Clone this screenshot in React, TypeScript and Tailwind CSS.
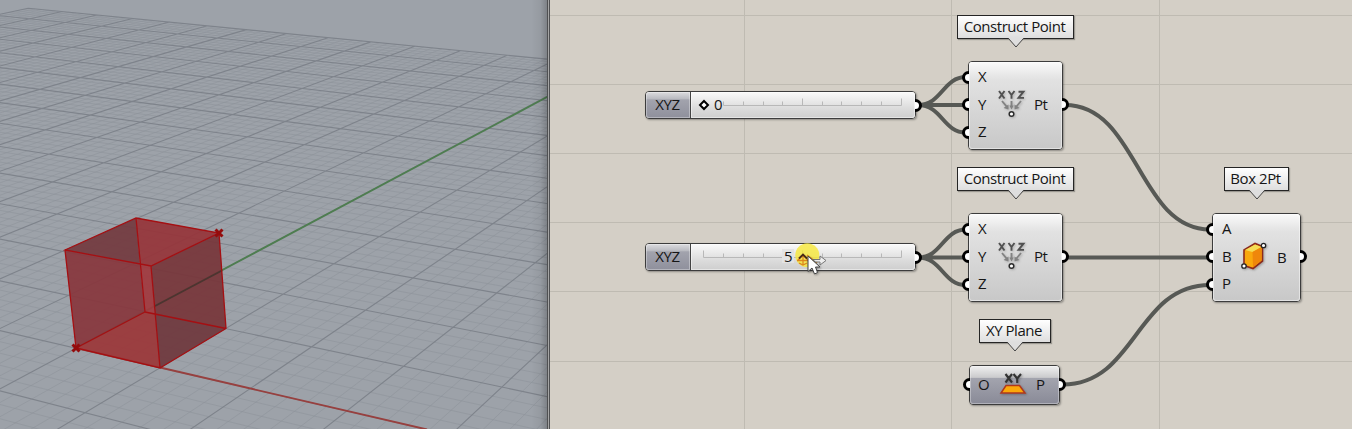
import React from 'react';

type Pt = [number, number];

// Perspective projection of the ground plane onto the viewport.
const project = (x: number, y: number): Pt => {
  const w = 1 - 0.006497 * x + 0.013389 * y;
  return [(76 + 15.795 * x + 15.676 * y) / w, (348.2 + 1.517 * x - 3.177 * y) / w];
};

const segment = (a: Pt, b: Pt) =>
  `M${a[0].toFixed(2)} ${a[1].toFixed(2)}L${b[0].toFixed(2)} ${b[1].toFixed(2)}`;

const X_MIN = -70;
const X_MAX = 45;
const Y_MIN = -30;
const Y_MAX = 70;

const gridPath = (major: boolean) => {
  const parts: string[] = [];
  for (let x = X_MIN; x <= X_MAX; x++) {
    if ((x % 5 === 0) === major) parts.push(segment(project(x, Y_MIN), project(x, Y_MAX)));
  }
  for (let y = Y_MIN; y <= Y_MAX; y++) {
    if ((y % 5 === 0) === major) parts.push(segment(project(X_MIN, y), project(X_MAX, y)));
  }
  return parts.join('');
};

const Cross = ({ x, y }: { x: number; y: number }) => (
  <path d={`M${x - 3.5} ${y - 3.5}l7 7m0 -7l-7 7`} stroke="#940c0c" strokeWidth="3" />
);

const Viewport = () => (
  <div className="relative h-full w-[547px] shrink-0 overflow-hidden bg-[#9da2a9]">
    <svg width="547" height="429" fill="none" className="block">
      <path d={gridPath(false)} stroke="#8d9299" strokeWidth="0.9" strokeOpacity="0.62" />
      <path d={gridPath(true)} stroke="#7e838b" strokeWidth="1.1" />
      <path d="M76 348L548 96.5" stroke="#4e7d50" strokeWidth="1.9" />
      <path d="M76 348L427 429.5" stroke="#97403f" strokeWidth="1.8" />
      <g fillOpacity="0.93">
        <path d="M65 250L136 218L140 264Z" fill="#733a3f" />
        <path d="M136 218L219 233L151 266L140 264Z" fill="#96353a" />
        <path d="M65 250L140 264L145 312L76 348Z" fill="#88373d" />
        <path d="M140 264L151 266L155 314L145 312Z" fill="#a0393e" />
        <path d="M76 348L145 312L155 314L160 368Z" fill="#9b3739" />
        <path d="M151 266L219 233L226 328.500L155 314Z" fill="#77363a" />
        <path d="M155 314L226 328.500L160 368Z" fill="#6f383d" />
      </g>
      <path d="M155 306L222 270.500" stroke="#4b3530" strokeWidth="1.6" />
      <path
        d="M65 250L136 218L219 233L151 266ZM65 250L76 348L160 368L151 266M160 368L226 328.5L219 233M136 218L145 312L76 348M145 312L226 328.5"
        stroke="#a50f12"
        strokeWidth="1.3"
      />
      <Cross x={219} y={233} />
      <Cross x={76} y={348} />
    </svg>
    <div className="absolute inset-y-0 right-0 w-[16px] bg-linear-to-r from-transparent via-black/5 via-60% to-black/20" />
  </div>
);

const Wires = () => (
  <svg width="802" height="429" fill="none" className="absolute inset-0">
    <path
      d="M194.500 0V429M401.500 0V429M609.500 0V429M0 15.500H802M0 84.500H802M0 153.500H802M0 222.500H802M0 291.500H802M0 361.500H802"
      stroke="#bfbbb2"
    />
    <g stroke="#575955" strokeWidth="4">
      <path d="M368 105C392 105 393 77 416 77M368 105H416M368 105C392 105 393 132.500 416 132.500" />
      <path d="M368 257.500C392 257.500 393 229.500 416 229.500M368 257.500H416M368 257.500C392 257.500 393 285 416 285" />
      <path d="M515 105C588 105 588 229.500 660 229.500M515 257.500H660M513 384.500C586 384.500 586 285 660 285" />
    </g>
  </svg>
);

const Port = ({ className }: { className: string }) => (
  <span className={`absolute size-[13px] rounded-full border-[3px] border-black bg-white ${className}`} />
);

const Tag = ({ label, className }: { label: string; className: string }) => (
  <div
    className={`absolute flex h-[24px] items-center justify-center border border-[#252525] bg-linear-to-b from-white to-[#dedede] pr-[2px] pb-[2px] shadow-[1px_1px_1px_#0004] ${className}`}
  >
    <span>{label}</span>
    <svg width="16" height="10" className="absolute top-[22px] left-1/2 -translate-x-1/2">
      <path d="M0.500 0L8 9L15.500 0Z" fill="#dedede" />
      <path d="M0.500 0.500L8 9L15.500 0.500" fill="none" stroke="#454545" />
    </svg>
  </div>
);

const nodeShell = 'absolute rounded-[4px] border border-[#3c3c3c] shadow-[1px_1px_2px_#0005]';

const nodeFace =
  'absolute inset-0 rounded-[3px] bg-linear-to-b from-[#fafafa] via-[#e2e2e2] via-20% to-[#c8c8c8] shadow-[inset_0_0_0_1px_#fff7]';

const PointIcon = () => (
  <svg width="30" height="32" viewBox="0 0 30 32" fill="none" className="drop-shadow-[1px_1px_1px_#0003]">
    <path
      d="M2 2L7.500 9.500M7.500 2L2 9.500M11.500 2L14.500 6L17.500 2M14.500 6V9.800M21.500 2.700H26.500L21.500 8.900H27"
      stroke="#505050"
      strokeWidth="1.9"
    />
    <path d="M5 12L10 18M14.500 12V17M24 12L19 18" stroke="#828282" strokeWidth="1.9" />
    <path d="M11.500 15.500V20.500L6.500 19ZM17.500 15.500V20.500L22.500 19ZM12.300 16.500H16.700L14.500 20.500Z" fill="#828282" />
    <circle cx="14.500" cy="25" r="2.300" fill="#fff" stroke="#2c2c2c" strokeWidth="1.500" />
  </svg>
);

const PointNode = ({ className }: { className: string }) => (
  <div className={`${nodeShell} flex h-[89px] w-[95px] items-center ${className}`}>
    <Port className="top-[9px] -left-[7px]" />
    <Port className="top-[36px] -left-[7px]" />
    <Port className="top-[64px] -left-[7px]" />
    <Port className="top-[36px] -right-[7px]" />
    <div className={nodeFace} />
    <div className="relative flex h-full w-full items-center pb-[2px] pl-[9px]">
      <div className="flex w-[19px] flex-col leading-[27.7px]">
        <span>X</span>
        <span>Y</span>
        <span>Z</span>
      </div>
      <PointIcon />
      <span className="-mt-px pl-[7px]">Pt</span>
    </div>
  </div>
);

const BoxIcon = () => (
  <svg width="30" height="32" viewBox="0 0 30 32" className="drop-shadow-[1px_1px_1px_#0004]">
    <path d="M5 9L16 2.500L23.500 5.500V20L14 27.500L5 24.500Z" fill="#f9a80d" stroke="#8c2a1c" strokeWidth="1.600" />
    <path d="M6 9L16 3.500L22.500 6L13.500 11Z" fill="#f5dc55" />
    <path d="M13.500 11L22.500 6V19.500L14 26.500Z" fill="#ef870b" />
    <circle cx="24.500" cy="4.500" r="2.200" fill="#fff" stroke="#222" strokeWidth="1.300" />
    <circle cx="5" cy="25" r="2.200" fill="#fff" stroke="#222" strokeWidth="1.300" />
  </svg>
);

const BoxNode = () => (
  <div className={`${nodeShell} top-[213px] left-[662px] h-[89px] w-[89px]`}>
    <Port className="top-[9px] -left-[7px]" />
    <Port className="top-[36px] -left-[7px]" />
    <Port className="top-[64px] -left-[7px]" />
    <Port className="top-[36px] -right-[7px]" />
    <div className={nodeFace} />
    <div className="relative flex h-full w-full items-center pb-[2px] pl-[9px]">
      <div className="flex w-[17px] flex-col leading-[27.7px]">
        <span>A</span>
        <span>B</span>
        <span>P</span>
      </div>
      <BoxIcon />
      <span className="pl-[8px]">B</span>
    </div>
  </div>
);

const PlaneNode = () => (
  <div className={`${nodeShell} top-[365px] left-[419px] h-[40px] w-[91px]`}>
    <Port className="top-[12px] -left-[7px]" />
    <Port className="top-[12px] -right-[7px]" />
    <div className="absolute inset-0 rounded-[3px] bg-[linear-gradient(#f0f0f0,#cbcbcd_30%,#a3a4ae_32%,#898a97)] shadow-[inset_0_0_0_1px_#fff5]" />
    <div className="relative flex h-full w-full items-center pb-[3px] pl-[8px]">
      <span className="w-[20px]">O</span>
      <svg width="30" height="26" viewBox="0 0 30 26" className="drop-shadow-[1px_1px_1px_#0004]">
        <path
          d="M7.500 3L14 11.500M14 3L7.500 11.500M15.500 3L19.200 7.500L23 3M19.200 7.500V12"
          fill="none"
          stroke="#333"
          strokeWidth="2.100"
        />
        <path d="M8 14.500H21.500L27 22H3Z" fill="#fba80a" stroke="#b0381c" strokeWidth="1.500" />
      </svg>
      <span className="pl-[8px]">P</span>
    </div>
  </div>
);

const Slider = ({ className, children }: { className: string; children: React.ReactNode }) => (
  <div className={`${nodeShell} left-[95px] flex h-[28px] w-[271px] ${className}`}>
    <Port className="top-[7px] -right-[7px]" />
    <div className="relative flex w-[45px] items-center justify-center rounded-l-[3px] border-r border-[#444] bg-[linear-gradient(#dcdcdf,#b9bac0_26%,#a2a3ad_30%,#8f909c)] pr-px pb-[3px] shadow-[inset_0_0_0_1px_#fff5]">
      XYZ
    </div>
    <div className="relative flex flex-1 items-center rounded-r-[3px] bg-linear-to-b from-[#fafafa] via-[#dddddd] via-60% to-[#cecece] shadow-[inset_0_0_0_1px_#fff7]">
      {children}
    </div>
  </div>
);

const tickXs = [12.5, 32.5, 52.5, 72.5, 91.5, 111.5, 131.5, 150.5, 170.5, 190.5, 210.5];

const Ticks = ({ from }: { from: number }) => (
  <svg width="224" height="26" className="absolute inset-0" fill="none" stroke="#b8b8b8">
    <path
      d={`M${tickXs[from]} 13.500H210.500${tickXs
        .slice(from)
        .map((x) => `M${x} 13.500v${x === 12.5 || x === 111.5 || x === 210.5 ? -7 : -4}`)
        .join('')}`}
    />
  </svg>
);

const Cursor = () => (
  <svg width="48" height="36" viewBox="0 0 48 36" fill="none" className="absolute top-[243px] left-[244px]">
    <circle cx="13.300" cy="12.300" r="12" fill="#f6e83c" fillOpacity="0.82" />
    <path d="M4 17L9 12L14 17M9 13V22M3 17.500H14M5 20L9 22L13 20M13 12L23 20" stroke="#dd861c" strokeWidth="1.300" />
    <path d="M5 15.500L9 11.500L13 15.500" stroke="#4a2a18" strokeWidth="1.800" />
    <path d="M19 16.500H26V13L32 17.500L26 22V19H21Z" fill="#eee" stroke="#777" />
    <path
      d="M14 13V28.500L18 25L20.500 31L23.500 29.500L21.500 24H26Z"
      fill="#fff"
      stroke="#444"
      className="drop-shadow-[1px_1px_1px_#0005]"
    />
  </svg>
);

const Canvas = () => (
  <div className="relative h-full flex-1 overflow-hidden bg-[#d4cfc6]">
    <Wires />
    <Tag label="Construct Point" className="top-[15px] left-[407px] w-[117px]" />
    <Tag label="Construct Point" className="top-[167px] left-[407px] w-[117px]" />
    <Tag label="XY Plane" className="top-[319px] left-[429px] w-[72px]" />
    <Tag label="Box 2Pt" className="top-[167px] left-[674px] w-[65px]" />
    <PointNode className="top-[61px] left-[418px]" />
    <PointNode className="top-[213px] left-[418px]" />
    <BoxNode />
    <PlaneNode />
    <Slider className="top-[91px]">
      <Ticks from={1} />
      <div className="relative flex items-center gap-[4px] pl-[6px]">
        <svg width="13" height="12">
          <path d="M7 2L11 6L7 10L3 6Z" fill="#fff" stroke="#000" strokeWidth="2" />
        </svg>
        <span className="pb-[2px]">0</span>
      </div>
    </Slider>
    <Slider className="top-[243px]">
      <Ticks from={0} />
      <span className="relative mb-[3px] ml-[91px] bg-[#e3e3e3] px-[2px] leading-[14px]">5</span>
    </Slider>
    <Cursor />
  </div>
);

export default function App() {
  return (
    <div className="flex h-[429px] w-[1352px] overflow-hidden font-['Open_Sans',sans-serif] text-[15px] leading-[20px] tracking-[-0.45px] text-[#161616]">
      <Viewport />
      <div className="w-[3px] shrink-0 border-x border-[#4f5052] bg-[#a5a5a5]" />
      <Canvas />
    </div>
  );
}
